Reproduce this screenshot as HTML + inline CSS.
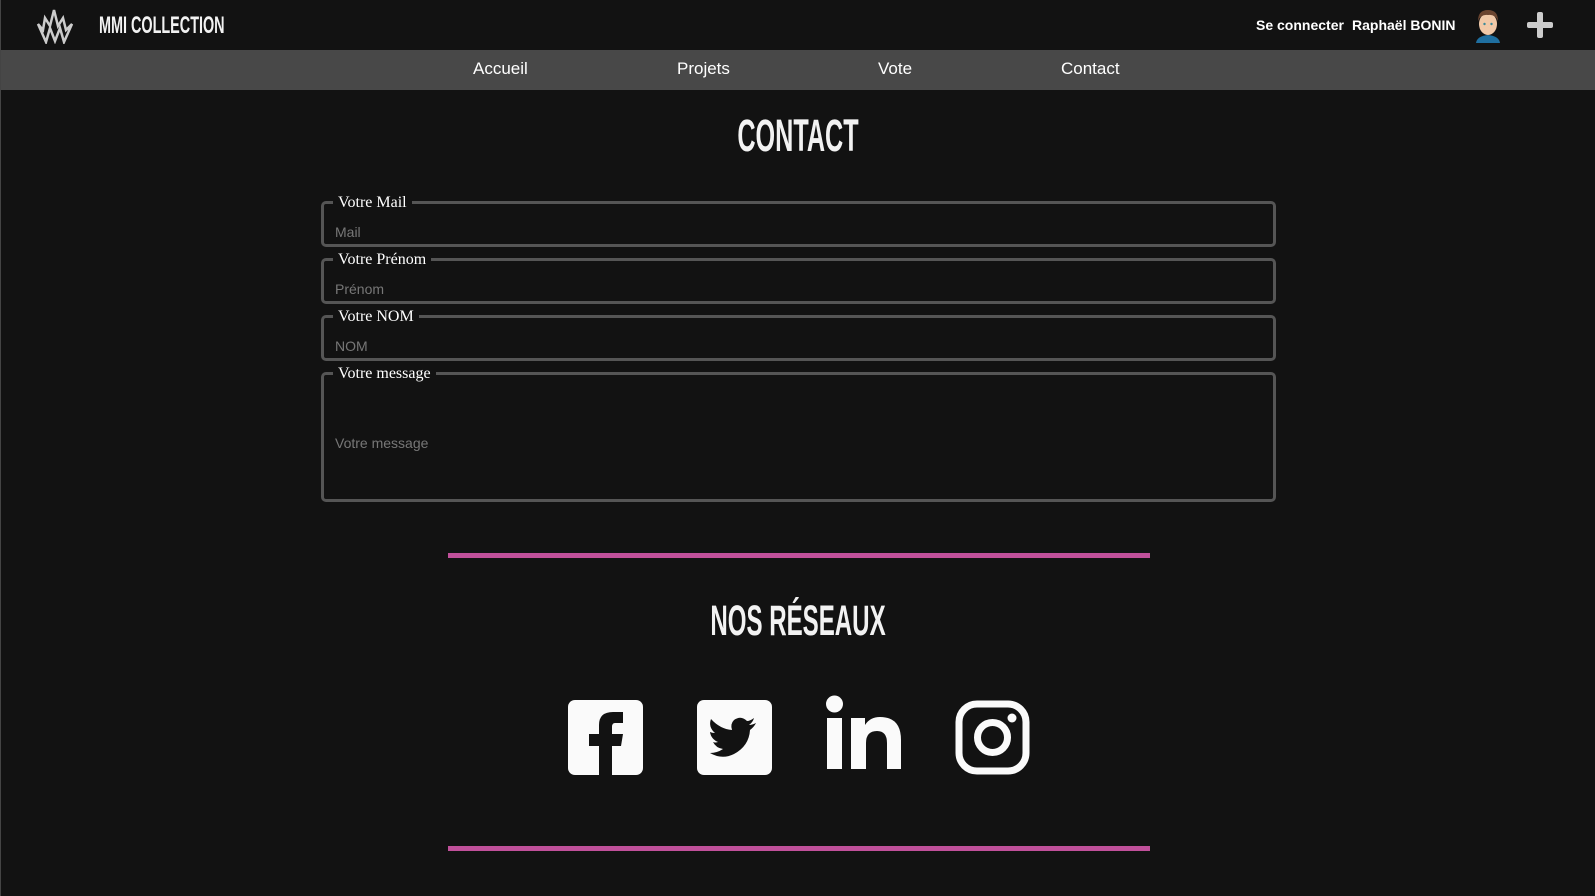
<!DOCTYPE html>
<html><head><meta charset="utf-8"><style>
*{margin:0;padding:0;box-sizing:border-box}
body{width:1595px;height:896px;background:#121212;overflow:hidden;font-family:"Liberation Sans",sans-serif;position:relative;border-left:1px solid #444}
.hdr{position:absolute;left:0;top:0;width:1595px;height:50px;background:#121212}
.nav{position:absolute;left:0;top:50px;width:1595px;height:40px;background:#484848}
.nav span{position:absolute;top:9px;color:#fff;font-size:17px}
.big{position:absolute;color:#f2f2f2;font-family:"Liberation Sans Narrow","Liberation Sans",sans-serif;font-weight:bold;white-space:nowrap}
.ctr{left:397px;width:800px;text-align:center;transform-origin:center top}
.fs{position:absolute;left:320px;width:955px;border:3px solid #555;border-radius:5px}
.fs .lb{position:absolute;top:-10px;left:9px;background:#121212;padding:0 5px;color:#fff;font-family:"Liberation Serif",serif;font-size:16px;line-height:18px}
.fs .ph{position:absolute;left:11px;color:#777;font-size:14px}
.line{position:absolute;left:447px;width:702px;height:5px;background:#c0509a}
</style></head><body>
<div class="hdr">
<svg style="position:absolute;left:35px;top:8px" width="38" height="36" viewBox="0 0 38 36" fill="none" stroke="#ccc" stroke-width="2.5" stroke-linejoin="miter">
<path d="M2 16 L10 34 L14 20 L19 33 L24 20 L28 34 L36 16 L30 22 L27 10 L22 18 L18 2 L14 18 L9 10 L7 22 Z"/></svg>
<div class="big" style="left:98px;top:12px;font-size:24px;transform:scaleX(0.6);transform-origin:left top">MMI COLLECTION</div>
<div style="position:absolute;left:1255px;top:17px;color:#fff;font-weight:bold;font-size:14px">Se connecter</div>
<div style="position:absolute;left:1351px;top:17px;color:#fff;font-weight:bold;font-size:14px">Raphaël BONIN</div>
<svg style="position:absolute;left:1472px;top:7px" width="30" height="36" viewBox="0 0 30 36">
<path d="M3 36 Q4 29 15 28 Q26 29 27 36Z" fill="#1f6fa0"/>
<ellipse cx="15" cy="17" rx="9" ry="11" fill="#f1c9a8"/>
<path d="M5 14 Q5 3 15 3 Q25 3 25 14 Q22 7 15 8 Q8 7 5 14Z" fill="#6b4530"/>
<circle cx="11.5" cy="17" r="1.2" fill="#3a8a9a"/><circle cx="18.5" cy="17" r="1.2" fill="#3a8a9a"/></svg>
<svg style="position:absolute;left:1526px;top:12px" width="26" height="26"><rect x="10" y="0" width="6" height="26" rx="2" fill="#ccc"/><rect x="0" y="10" width="26" height="6" rx="2" fill="#ccc"/></svg>
</div>
<div class="nav"><span style="left:472px">Accueil</span><span style="left:676px">Projets</span><span style="left:877px">Vote</span><span style="left:1060px">Contact</span></div>
<div class="big ctr" style="top:110px;font-size:45px;transform:scaleX(0.56)">CONTACT</div>
<div class="fs" style="top:201px;height:46px"><div class="lb">Votre Mail</div><div class="ph" style="top:20px">Mail</div></div>
<div class="fs" style="top:258px;height:46px"><div class="lb">Votre Prénom</div><div class="ph" style="top:20px">Prénom</div></div>
<div class="fs" style="top:315px;height:46px"><div class="lb">Votre NOM</div><div class="ph" style="top:20px">NOM</div></div>
<div class="fs" style="top:372px;height:130px"><div class="lb">Votre message</div><div class="ph" style="top:60px">Votre message</div></div>
<div class="line" style="top:553px"></div>
<div class="big ctr" style="top:597px;font-size:43px;transform:scaleX(0.56)">NOS RÉSEAUX</div>
<svg style="position:absolute;left:567px;top:700px" width="75" height="75" viewBox="0 0 75 75"><rect width="75" height="75" rx="7" fill="#fafafa"/><path d="M31 75 V46 H21 V34 H31 V25 Q31 12 45 12 H55 V23 H47 Q44 23 44 27 V34 H55 L53 46 H44 V75Z" fill="#121212"/></svg>
<svg style="position:absolute;left:696px;top:700px" width="75" height="75" viewBox="0 0 75 75"><rect width="75" height="75" rx="7" fill="#fafafa"/><path d="M13 53 Q25 60 37 54 Q52 46 53 30 Q57 27 59 23 Q55 25 52 25 Q56 22 57 18 Q53 21 50 21 Q44 15 37 20 Q33 24 35 30 Q23 29 14 19 Q11 27 18 33 Q15 33 13 32 Q14 39 21 42 Q18 43 16 42 Q19 48 26 49 Q20 53 13 53Z" fill="#121212"/></svg>
<svg style="position:absolute;left:825px;top:695px" width="76" height="75" viewBox="0 0 76 75"><circle cx="8.5" cy="9" r="8.5" fill="#fafafa"/><rect x="1" y="23" width="15" height="51" fill="#fafafa"/><path d="M25 23 H39 V30 Q44 22 54 22 Q75 22 75 45 V74 H61 V48 Q61 36 51 36 Q40 36 40 48 V74 H25Z" fill="#fafafa"/></svg>
<svg style="position:absolute;left:954px;top:700px" width="75" height="75" viewBox="0 0 75 75"><rect x="4" y="4" width="67" height="67" rx="18" fill="none" stroke="#fafafa" stroke-width="7"/><circle cx="37.5" cy="37.5" r="15" fill="none" stroke="#fafafa" stroke-width="7"/><circle cx="57" cy="18" r="4.5" fill="#fafafa"/></svg>
<div class="line" style="top:846px"></div>
</body></html>
